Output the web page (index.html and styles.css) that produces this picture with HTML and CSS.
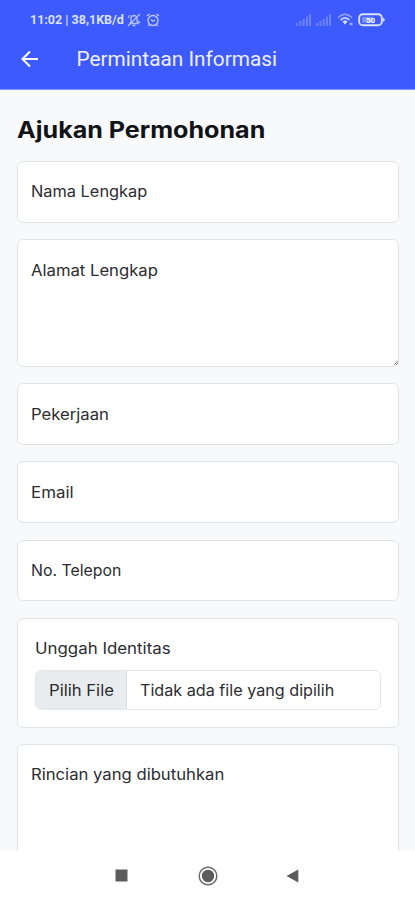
FILE: index.html
```html
<!DOCTYPE html>
<html lang="id">
<head>
<meta charset="utf-8">
<meta name="viewport" content="width=device-width, initial-scale=1">
<title>Permintaan Informasi</title>
<link rel="stylesheet" href="styles.css">
</head>
<body>
<header class="top">
  <div class="status">
    <span class="clock">11:02 | 38,1KB/d</span>
    <svg class="bell" width="14" height="14" viewBox="0 0 14 14" fill="none" stroke="currentColor" stroke-width="1.3"><path d="M3 10.500h8L10 8.500V5.500a3 3 0 0 0-6 0v3zM5.500 12.500h3M1 13L13 1M1 5l2-3M11 8l2 2"/></svg>
    <svg class="alarm" width="14" height="14" viewBox="0 0 14 14" fill="none" stroke="currentColor" stroke-width="1.3"><circle cx="7" cy="7.500" r="5"/><path d="M1 3l2.500-2M13 3l-2.500-2M4.800 6.500L7 8.300l2.200-1.300M3.500 11.500L2.300 13M10.500 11.500l1.200 1.500"/></svg>
    <span class="grow"></span>
    <svg class="signal" width="16" height="12" viewBox="0 0 16 12" fill="currentColor"><path d="M0 9h2v3H0zM3.300 7h2v5h-2zM6.600 5h2v7h-2zM9.900 2.500h2V12h-2zM13 0h2v12h-2z"/></svg>
    <svg class="signal" width="16" height="12" viewBox="0 0 16 12" fill="currentColor"><path d="M0 9h2v3H0zM3.300 7h2v5h-2zM6.600 5h2v7h-2zM9.900 2.500h2V12h-2zM13 0h2v12h-2z"/></svg>
    <svg class="wifi" width="17" height="13" viewBox="0 0 17 13" fill="none" stroke="currentColor" stroke-width="1.7"><path opacity=".5" d="M1 4.500Q8 -2 15 4.500"/><path opacity=".8" d="M3.500 7q4.500-4 9 0"/><path d="M5.500 8.500Q8 6.500 10.500 8.500L8 11.500z" fill="currentColor" stroke="none"/><path opacity=".6" stroke-width="2.600" d="M12.500 11h3"/></svg>
    <svg class="battery" width="28" height="14" viewBox="0 0 28 14"><rect x="1.200" y="1.200" width="22.600" height="11" rx="3.500" fill="none" stroke="currentColor" stroke-width="1.900"/><rect x="4" y="3.700" width="11" height="6" rx="1" fill="currentColor" opacity=".4"/><path d="M25 4.500l2.200 2.200L25 9z" fill="currentColor"/><text x="12.500" y="9.700" text-anchor="middle" class="level">50</text></svg>
  </div>
  <div class="bar">
    <svg class="back" width="18" height="18" viewBox="0 0 18 18" fill="none" stroke="currentColor" stroke-width="2"><path d="M17 9H2M9 1.500L1.500 9 9 16.500"/></svg>
    <span class="title">Permintaan Informasi</span>
  </div>
</header>
<main class="content">
  <h1 class="heading">Ajukan Permohonan</h1>
  <form class="form">
    <div class="field"><span class="label">Nama Lengkap</span></div>
    <div class="field area"><span class="label wide">Alamat Lengkap</span>
      <svg class="grip" width="4" height="4" viewBox="0 0 4 4" stroke="#888" stroke-width="1"><path d="M0 4L4 0M2 4l2-2"/></svg>
    </div>
    <div class="field"><span class="label wide">Pekerjaan</span></div>
    <div class="field"><span class="label wider">Email</span></div>
    <div class="field"><span class="label slim">No. Telepon</span></div>
    <div class="upload">
      <span class="label wider">Unggah Identitas</span>
      <div class="file"><div class="pick"><span class="label wide">Pilih File</span></div><div class="name"><span class="label narrow">Tidak ada file yang dipilih</span></div></div>
    </div>
    <div class="field last"><span class="label wide">Rincian yang dibutuhkan</span></div>
  </form>
</main>
<nav class="nav">
  <svg width="13" height="13" viewBox="0 0 13 13"><path d="M.5.500h12v12H.5z" fill="#5c5c5c"/></svg>
  <svg width="20" height="20" viewBox="0 0 20 20"><circle cx="10" cy="10" r="8.800" fill="none" stroke="#666" stroke-width="1.400"/><circle cx="10" cy="10" r="6.200" fill="#5c5c5c"/></svg>
  <svg width="13" height="14" viewBox="0 0 13 14"><path d="M12.300.5v13L.5 7z" fill="#5c5c5c"/></svg>
</nav>
</body>
</html>
```
FILE: styles.css
```css
* { box-sizing: border-box; }
body {
  margin: 0;
  height: 900px;
  overflow: hidden;
  display: flex;
  flex-direction: column;
  background: #f8f9fb;
  color: #2b2d30;
  font-family: Inter, "Noto Sans", sans-serif;
  font-size: 15.5px;
}
svg { display: block; flex: none; }
.top { height: 90px; flex: none; background: #3d5afe; border-bottom: 1px solid #8795f2; color: #fff; font-family: Roboto, sans-serif; }
.status { display: flex; align-items: center; height: 39px; padding: 0 29px 0 30px; color: #dbe1ff; }
.clock { width: 96px; font-size: 12.5px; font-weight: 700; white-space: nowrap; }
.bell { margin-left: 1px; opacity: .75; }
.alarm { margin-left: 5px; opacity: .85; }
.grow { flex: 1; }
.signal { opacity: .3; margin-right: 4px; }
.wifi { margin: 0 4px 0 1px; }
.level { font-size: 8px; font-weight: 700; fill: #fff; }
.bar { display: flex; align-items: center; height: 40px; padding-left: 20.5px; }
.title { margin-left: 38px; font-size: 20.8px; color: #eef0ff; white-space: nowrap; }
.content { flex: 1; min-height: 0; overflow: hidden; padding: 25px 16px 0 17px; }
.heading { width: max-content; margin: 0 0 17px; font-size: 22.5px; line-height: 29px; font-weight: 700; color: #111316; white-space: nowrap; transform: scaleX(1.115); transform-origin: 0 50%; }
.form { display: flex; flex-direction: column; gap: 16.6px; }
.field, .upload { background: #fff; border: 1px solid #e0e3e6; border-radius: 6px; flex: none; white-space: nowrap; }
.field { position: relative; height: 61.7px; padding: 20.4px 13px 0; line-height: 20px; }
.area { height: 127.3px; }
.last { height: 128px; padding-top: 19.8px; }
.grip { position: absolute; right: 0; bottom: 1px; }
.upload { height: 109.5px; padding: 20.4px 17px 0; line-height: 20px; }
.file { display: flex; height: 40px; margin-top: 10.6px; border: 1px solid #e3e6e9; border-radius: 6px; overflow: hidden; line-height: 39px; }
.pick { width: 91px; padding-left: 13px; background: #e9ecef; border-right: 1px solid #dce0e3; }
.name { padding-left: 13px; }
.label { display: block; width: max-content; transform: scaleX(1.055); transform-origin: 0 50%; }
.wide { transform: scaleX(1.075); }
.wider { transform: scaleX(1.088); }
.narrow { transform: scaleX(1.043); }
.slim { transform: scaleX(1.022); }
.nav { height: 49px; flex: none; background: #fff; display: flex; align-items: center; justify-content: space-between; padding: 0 116px 0 115px; }
.nav svg:nth-child(2) { margin-left: 1px; }
```
